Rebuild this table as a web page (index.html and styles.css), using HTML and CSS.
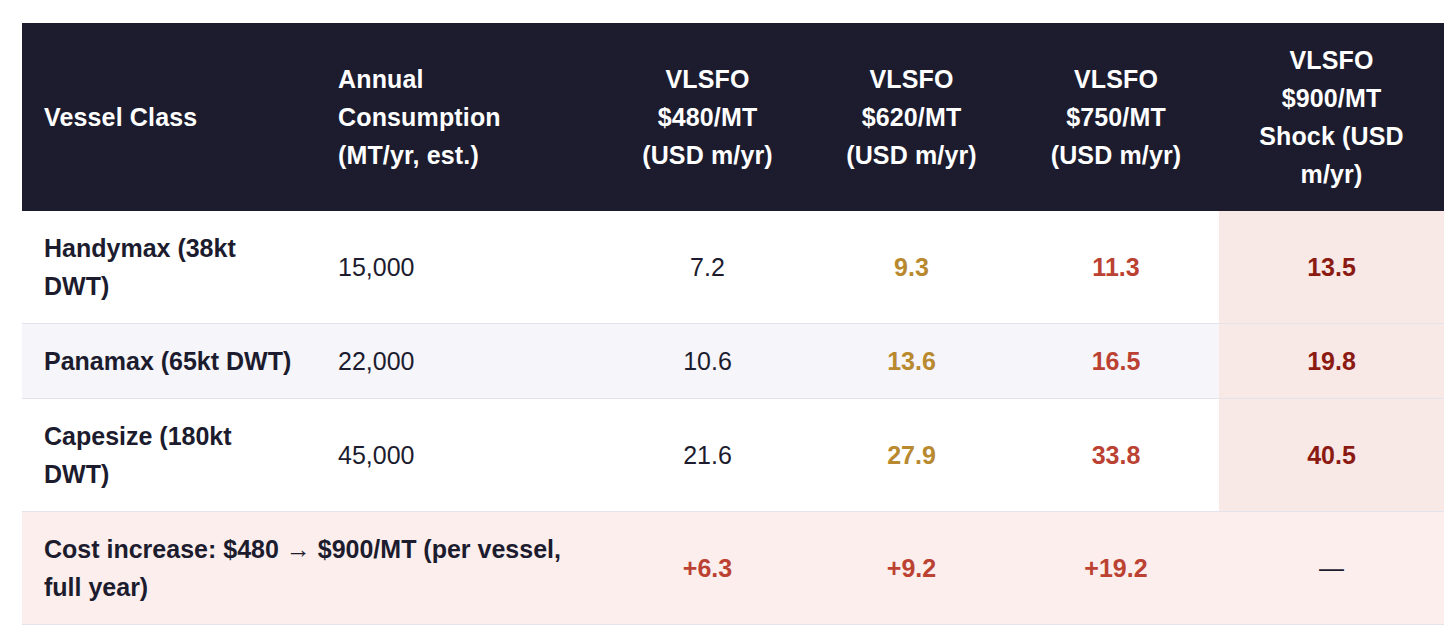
FILE: index.html
```html
<!DOCTYPE html>
<html lang="en">
<head>
<meta charset="utf-8">
<title>VLSFO cost by vessel class</title>
<link rel="stylesheet" href="styles.css">
</head>
<body>
<div class="wrap">
<table class="cost-table">
  <colgroup>
    <col class="c-vessel">
    <col class="c-cons">
    <col class="c-p480">
    <col class="c-p620">
    <col class="c-p750">
    <col class="c-p900">
  </colgroup>
  <thead>
    <tr>
      <th class="left">Vessel Class</th>
      <th class="left">Annual Consumption (MT/yr, est.)</th>
      <th>VLSFO $480/MT (USD m/yr)</th>
      <th>VLSFO $620/MT (USD m/yr)</th>
      <th>VLSFO $750/MT (USD m/yr)</th>
      <th class="narrow">VLSFO $900/MT Shock (USD m/yr)</th>
    </tr>
  </thead>
  <tbody>
    <tr>
      <td class="left name">Handymax (38kt DWT)</td>
      <td class="left">15,000</td>
      <td>7.2</td>
      <td class="gold">9.3</td>
      <td class="red">11.3</td>
      <td class="shock">13.5</td>
    </tr>
    <tr class="alt">
      <td class="left name">Panamax (65kt DWT)</td>
      <td class="left">22,000</td>
      <td>10.6</td>
      <td class="gold">13.6</td>
      <td class="red">16.5</td>
      <td class="shock">19.8</td>
    </tr>
    <tr>
      <td class="left name">Capesize (180kt DWT)</td>
      <td class="left">45,000</td>
      <td>21.6</td>
      <td class="gold">27.9</td>
      <td class="red">33.8</td>
      <td class="shock">40.5</td>
    </tr>
    <tr class="total">
      <td class="left name" colspan="2">Cost increase: $480 → $900/MT (per vessel, full year)</td>
      <td class="red">+6.3</td>
      <td class="red">+9.2</td>
      <td class="red">+19.2</td>
      <td class="dash">—</td>
    </tr>
  </tbody>
</table>
</div>
</body>
</html>
```

FILE: styles.css
```css
html, body {
  margin: 0;
  padding: 0;
  background: #ffffff;
}

.wrap {
  padding: 23px 12px 0 22px;
}

.cost-table {
  width: 1422px;
  table-layout: fixed;
  border-collapse: collapse;
  font-family: "Liberation Sans", Arial, Helvetica, sans-serif;
  font-size: 25px;
  line-height: 38px;
  color: #1c1c2e;
}

.c-vessel { width: 294px; }
.c-cons { width: 289px; }
.c-p480 { width: 205px; }
.c-p620 { width: 203px; }
.c-p750 { width: 206px; }
.c-p900 { width: 225px; }

.cost-table th,
.cost-table td {
  padding: 18px 22px;
  text-align: center;
  vertical-align: middle;
}

.cost-table th {
  background: #1c1c2e;
  color: #ffffff;
  font-weight: 700;
  letter-spacing: 0.15px;
}

.cost-table th.narrow {
  padding-left: 24px;
  padding-right: 24px;
}

.cost-table td {
  border-bottom: 1px solid #e4e2ea;
}

.cost-table .left {
  text-align: left;
}

.cost-table .name {
  font-weight: 700;
}

.alt td {
  background: #f6f5fa;
}

.gold {
  color: #b8892e;
  font-weight: 700;
}

.red {
  color: #bb4232;
  font-weight: 700;
}

.cost-table td.shock {
  background: #f8e8e6;
  color: #8b1a12;
  font-weight: 700;
}

.total td {
  background: #fbeeed;
}
```
